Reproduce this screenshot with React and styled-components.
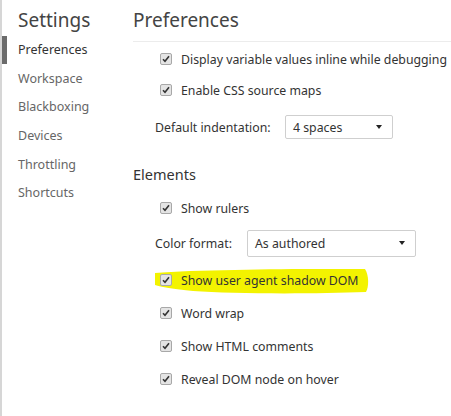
import styled, { createGlobalStyle } from "styled-components";

const GlobalStyle = createGlobalStyle`
  html, body {
    margin: 0;
    padding: 0;
    background: #fff;
  }
  body {
    font-family: "Noto Sans", "Open Sans", sans-serif;
    color: #333;
  }
`

const Page = styled.div`
  display: flex;
  width: 451px;
  height: 416px;
  border-left: 2px solid #d6d6d6;
  box-sizing: border-box;
  overflow: hidden;
`

const Sidebar = styled.nav`
  width: 131px;
  flex-shrink: 0;
  display: flex;
  flex-direction: column;
`

const SideTitle = styled.h1`
  margin: 0;
  padding: 8px 0 0 16px;
  height: 35.5px;
  box-sizing: border-box;
  font-size: 19px;
  font-weight: 400;
  color: #444;
  line-height: 24px;
`

const NavItem = styled.div`
  height: 28.6px;
  display: flex;
  align-items: center;
  border-left: 5px solid ${(props) => (props.active ? "#6b6b6b" : "transparent")};
  padding-left: 11px;
  font-size: 12.5px;
  color: ${(props) => (props.active ? "#333" : "#666")};
`

const Main = styled.main`
  flex: 1;
  display: flex;
  flex-direction: column;
`

const Header = styled.h2`
  margin: 0;
  height: 42px;
  box-sizing: border-box;
  padding-top: 8px;
  font-size: 19px;
  font-weight: 400;
  line-height: 24px;
  color: #444;
  border-bottom: 1px solid #ececec;
`

const Section = styled.section`
  display: flex;
  flex-direction: column;
  padding-left: 22px;
`

const SectionTitle = styled.h3`
  margin: 0 0 0 -22px;
  height: ${(props) => props.h || "34px"};
  display: flex;
  align-items: center;
  font-size: 14.5px;
  font-weight: 400;
  color: #333;
`

const Row = styled.label`
  position: relative;
  display: flex;
  align-items: center;
  height: ${(props) => props.h || "31px"};
  font-size: 12.3px;
  color: #333;
  white-space: nowrap;
`

const CheckRow = styled(Row)`
  padding-left: 5px;
  gap: 9px;
`

const Box = styled.span`
  position: relative;
  z-index: 1;
  width: 10px;
  height: 10px;
  border: 1px solid #a8a8a8;
  border-radius: 2px;
  background: #e4e4e4;
  display: flex;
  align-items: center;
  justify-content: center;
`

const Text = styled.span`
  position: relative;
  z-index: 1;
`

const Label = styled.span`
  width: ${(props) => props.w};
`

const Select = styled.div`
  width: ${(props) => props.w};
  height: ${(props) => props.h || "24px"};
  box-sizing: border-box;
  border: 1px solid #cfcfcf;
  border-radius: 2px;
  display: flex;
  align-items: center;
  justify-content: space-between;
  padding: 0 10px 0 7px;
  background: #fff;
`

const Caret = styled.span`
  width: 0;
  height: 0;
  border-left: 3.5px solid transparent;
  border-right: 3.5px solid transparent;
  border-top: 4px solid #222;
`

const Marker = styled.svg`
  position: absolute;
  left: -2px;
  top: calc(50% - 11px);
  z-index: 0;
`

const Check = () => (
  <Box>
    <svg width="8" height="8" viewBox="0 0 8 8">
      <path d="M1 4.2 L3 6.3 L7 1.3" stroke="#333" strokeWidth="1.6" fill="none" />
    </svg>
  </Box>
)

const CheckItem = ({ children, h, highlight }) => (
  <CheckRow h={h}>
    {highlight && (
      <Marker width="220" height="26" viewBox="0 0 220 26">
        <path
          d="M2 4 C40 1 120 0 170 0 L212 0 C216 6 216 18 213 23 C160 25 80 25 40 22 C20 20 8 18 2 16 Z"
          fill="#f3f300"
        />
      </Marker>
    )}
    <Check />
    <Text>{children}</Text>
  </CheckRow>
)

const nav = ["Preferences", "Workspace", "Blackboxing", "Devices", "Throttling", "Shortcuts"]

const App = () => {
  return (
    <>
      <GlobalStyle />
      <Page>
        <Sidebar>
          <SideTitle>Settings</SideTitle>
          {nav.map((n, i) => (
            <NavItem key={n} active={i === 0}>{n}</NavItem>
          ))}
        </Sidebar>
        <Main>
          <Header>Preferences</Header>
          <Section>
            <CheckItem h="34px">Display variable values inline while debugging</CheckItem>
            <CheckItem h="28px">Enable CSS source maps</CheckItem>
            <Row h="46px">
              <Label w="130px">Default indentation:</Label>
              <Select w="108px">
                4 spaces
                <Caret />
              </Select>
            </Row>
            <SectionTitle h="48px">Elements</SectionTitle>
            <CheckItem h="20px">Show rulers</CheckItem>
            <Row h="50px">
              <Label w="92px">Color format:</Label>
              <Select w="169px" h="27px">
                As authored
                <Caret />
              </Select>
            </Row>
            <CheckItem h="24px" highlight>Show user agent shadow DOM</CheckItem>
            <CheckItem h="42px">Word wrap</CheckItem>
            <CheckItem h="24px">Show HTML comments</CheckItem>
            <CheckItem h="42px">Reveal DOM node on hover</CheckItem>
          </Section>
        </Main>
      </Page>
    </>
  )
}

export default App;
